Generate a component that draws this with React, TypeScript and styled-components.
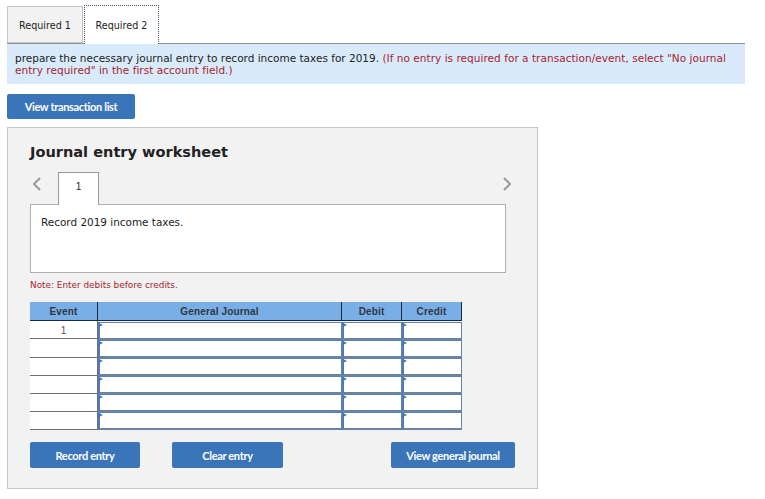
import { createGlobalStyle } from "styled-components";
import styled from "styled-components";

const GlobalStyle = createGlobalStyle`
  html, body {
    margin: 0;
    padding: 0;
    background: #fff;
  }
  body {
    font-family: "DejaVu Sans", sans-serif;
    color: #222;
  }
`;

const Page = styled.div`
  width: 765px;
  height: 499px;
  box-sizing: border-box;
  padding: 6px 20px 0 7px;
  overflow: hidden;
`;

const TabBar = styled.div`
  display: flex;
  align-items: flex-start;
  height: 37px;
  gap: 1px;
`;

const TopTab = styled.div<{ $active?: boolean }>`
  box-sizing: border-box;
  width: ${(p) => (p.$active ? "75px" : "76px")};
  height: ${(p) => (p.$active ? "39px" : "37px")};
  margin-top: ${(p) => (p.$active ? "-1px" : "0")};
  padding-top: 1px;
  display: flex;
  align-items: center;
  justify-content: center;
  font-size: 9.6px;
  color: #222;
  background: ${(p) => (p.$active ? "#fff" : "#f2f2f2")};
  border: 1px ${(p) => (p.$active ? "dotted #46597a" : "solid #c4c4c4")};
  border-bottom: ${(p) => (p.$active ? "none" : "1px solid #c4c4c4")};
  position: relative;
  z-index: 1;
`;

const Instructions = styled.div`
  box-sizing: border-box;
  height: 41px;
  padding: 8px 8px 0;
  background: #d9ebfa;
  border-top: 1px solid #8e9499;
  font-size: 10.5px;
  line-height: 12px;
  color: #222;
`;

const Hint = styled.span`
  color: #a8232e;
  letter-spacing: 0.04px;
`;

const Button = styled.button<{ $width: number; $height?: number }>`
  width: ${(p) => p.$width}px;
  height: ${(p) => p.$height ?? 26}px;
  padding: 0;
  border: none;
  border-radius: 2px;
  background: #3a75b9;
  color: #fff;
  font-family: "Lato", sans-serif;
  font-size: 11px;
  font-weight: 700;
  letter-spacing: -0.33px;
  text-align: center;
`;

const TransactionButton = styled(Button)`
  display: block;
  margin-top: 10px;
`;

const Panel = styled.div`
  box-sizing: border-box;
  width: 531px;
  height: 362px;
  margin-top: 8px;
  padding: 15px 22px 0;
  background: #f2f2f2;
  border: 1px solid #c4c4c4;
`;

const Title = styled.h2`
  margin: 0;
  height: 20px;
  font-size: 14.55px;
  line-height: 18px;
  font-weight: 700;
  color: #222;
`;

const EntryNav = styled.div`
  display: flex;
  align-items: flex-start;
  width: 482px;
  height: 33px;
  margin-top: 9px;
`;

const Chevron = styled.svg`
  display: block;
  margin-top: 5px;
  flex: none;
`;

const LeftChevron = styled(Chevron)`
  margin-left: 2px;
`;

const EntryTab = styled.div`
  box-sizing: border-box;
  width: 41px;
  height: 33px;
  margin-left: 17px;
  padding-bottom: 6px;
  display: flex;
  align-items: center;
  justify-content: center;
  background: #fff;
  border: 1px solid #9a9a9a;
  border-bottom: none;
  font-family: "Liberation Sans", sans-serif;
  font-size: 10px;
  position: relative;
  z-index: 1;
`;

const NavSpacer = styled.div`
  flex: 1;
`;

const Description = styled.div`
  box-sizing: border-box;
  width: 476px;
  height: 69px;
  margin-top: -1px;
  padding: 11px 10px 0;
  background: #fff;
  border: 1px solid #b0b0b0;
  font-size: 10.45px;
  line-height: 12px;
`;

const Note = styled.div`
  margin-top: 6px;
  height: 12px;
  font-size: 8.9px;
  line-height: 12px;
  color: #a8232e;
`;

const Table = styled.div`
  width: 432px;
  margin-top: 11px;
`;

const HeadRow = styled.div`
  display: grid;
  grid-template-columns: 68px 244px 60px 60px;
`;

const HeadCell = styled.div`
  box-sizing: border-box;
  height: 19px;
  display: flex;
  align-items: center;
  justify-content: center;
  background: #7aaee6;
  border-right: 1px solid #1b2a3a;
  border-bottom: 1px solid #1b2a3a;
  font-family: "Liberation Sans", sans-serif;
  font-size: 10px;
  font-weight: 700;
  letter-spacing: 0.15px;
  color: #2f3843;
`;

const TableBody = styled.div`
  display: flex;
`;

const EventColumn = styled.div`
  display: flex;
  flex-direction: column;
  width: 68px;
  flex: none;
`;

const EventCell = styled.div<{ $tall?: boolean }>`
  box-sizing: border-box;
  height: ${(p) => (p.$tall ? "19px" : "18px")};
  padding-top: 1px;
  display: flex;
  align-items: center;
  justify-content: center;
  background: #fff;
  border-right: 1px solid #6e6e6e;
  border-bottom: 1px solid #6e6e6e;
  font-family: "Liberation Sans", sans-serif;
  font-size: 10px;
  color: #555;
`;

const InputGrid = styled.div`
  display: grid;
  grid-template-columns: 244px 60px 60px;
  grid-auto-rows: 18px;
  padding-top: 1px;
`;

const InputCell = styled.div`
  box-sizing: border-box;
  background: #fff;
  border-top: 1px solid #5f84b3;
  border-bottom: 2px solid #6b83a3;
  border-left: 2px solid #4f7cb3;
  border-right: 1px solid #6b83a3;
  position: relative;

  &::before {
    content: "";
    position: absolute;
    left: -1px;
    top: 0;
    border-left: 4px solid #3a7cc4;
    border-top: 2.5px solid transparent;
    border-bottom: 2.5px solid transparent;
  }
`;

const Actions = styled.div`
  display: flex;
  width: 485px;
  margin-top: 12px;
`;

const SecondaryButton = styled(Button)`
  margin-left: 32px;
`;

const LastButton = styled(Button)`
  margin-left: auto;
`;

const rows = ["1", "", "", "", "", ""];

export default function App() {
  return (
    <Page>
      <GlobalStyle />
      <TabBar>
        <TopTab>Required 1</TopTab>
        <TopTab $active>Required 2</TopTab>
      </TabBar>
      <Instructions>
        prepare the necessary journal entry to record income taxes for 2019.{" "}
        <Hint>
          (If no entry is required for a transaction/event, select "No journal entry required" in the first account field.)
        </Hint>
      </Instructions>
      <TransactionButton $width={128} $height={25}>View transaction list</TransactionButton>
      <Panel>
        <Title>Journal entry worksheet</Title>
        <EntryNav>
          <LeftChevron width="9" height="14" viewBox="0 0 9 14">
            <path d="M8 1 L2 7 L8 13" fill="none" stroke="#999" strokeWidth="2" />
          </LeftChevron>
          <EntryTab>1</EntryTab>
          <NavSpacer />
          <Chevron width="9" height="14" viewBox="0 0 9 14">
            <path d="M1 1 L7 7 L1 13" fill="none" stroke="#999" strokeWidth="2" />
          </Chevron>
        </EntryNav>
        <Description>Record 2019 income taxes.</Description>
        <Note>Note: Enter debits before credits.</Note>
        <Table>
          <HeadRow>
            <HeadCell>Event</HeadCell>
            <HeadCell>General Journal</HeadCell>
            <HeadCell>Debit</HeadCell>
            <HeadCell>Credit</HeadCell>
          </HeadRow>
          <TableBody>
            <EventColumn>
              {rows.map((event, i) => (
                <EventCell key={i} $tall={i === 1}>{event}</EventCell>
              ))}
            </EventColumn>
            <InputGrid>
              {rows.map((_, i) => [
                <InputCell key={`journal-${i}`} />,
                <InputCell key={`debit-${i}`} />,
                <InputCell key={`credit-${i}`} />,
              ])}
            </InputGrid>
          </TableBody>
        </Table>
        <Actions>
          <Button $width={110}>Record entry</Button>
          <SecondaryButton $width={111}>Clear entry</SecondaryButton>
          <LastButton $width={124}>View general journal</LastButton>
        </Actions>
      </Panel>
    </Page>
  );
}
